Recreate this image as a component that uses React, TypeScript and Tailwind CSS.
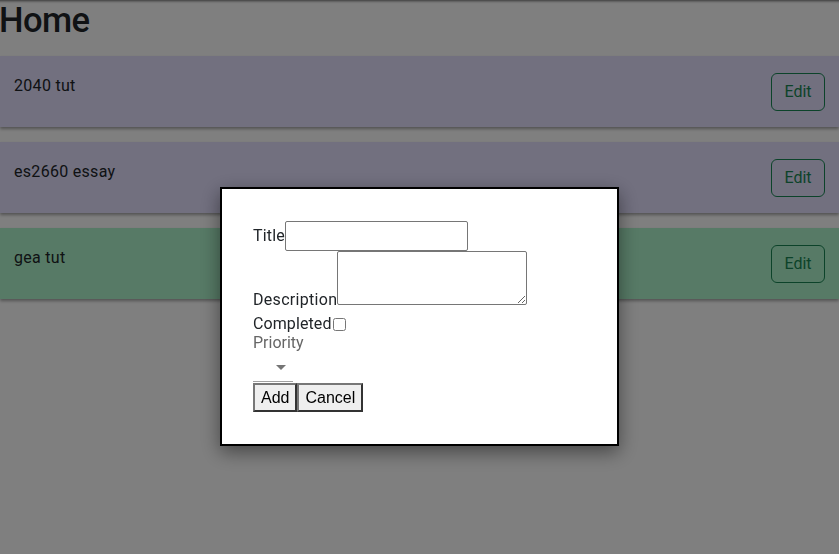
import React from "react";

const tasks = [
  { title: "2040 tut", done: false },
  { title: "es2660 essay", done: false },
  { title: "gea tut", done: true },
];

export default function App() {
  return (
    <div className="relative min-h-[554px] bg-white text-[#212529] font-['Roboto',sans-serif] text-base leading-6 shadow-[inset_0_4px_3px_-3px_rgba(0,0,0,0.6)]">
      <h1 className="text-[34.6px] leading-[1.2] font-medium tracking-[-0.6px] mb-2 -ml-[1px]">Home</h1>
      <div className="flex flex-col gap-[15px] pt-[6px]">
        {tasks.map((t) => (
          <div
            key={t.title}
            className={`flex justify-between h-[71px] pl-[14px] pr-[14px] pt-4 shadow-[0_2px_3px_rgba(0,0,0,0.35)] ${
              t.done ? "bg-[#aef5cc]" : "bg-[#e4e0fe]"
            }`}
          >
            <div className="mt-[2px] tracking-[0.3px]">{t.title}</div>
            <button className="self-center -mt-[15px] h-[38px] w-[54px] border border-[#198754] rounded-[6px] text-[#198754] text-base leading-6">
              Edit
            </button>
          </div>
        ))}
      </div>

      <div className="fixed inset-0 bg-black/50 flex justify-center items-start pt-[187px]">
        <div className="w-[399px] h-[259px] bg-white border-2 border-black shadow-[0_6px_18px_rgba(0,0,0,0.45)] pl-[31px] pt-8">
          <div className="flex items-center h-[30px]">
            <label className="tracking-[0.2px]">Title</label>
            <input className="w-[183px] h-[30px] border border-[#767676] rounded-[2px] px-[2px]" />
          </div>
          <div className="flex items-end h-[54px]">
            <label className="leading-4 tracking-[0.3px] -mb-[3px]">Description</label>
            <textarea className="w-[190px] h-[54px] border border-[#767676] rounded-[2px] resize-y"></textarea>
          </div>
          <div className="flex items-center h-[24px] mt-[7px]">
            <label className="tracking-[0.1px]">Completed</label>
            <input type="checkbox" className="w-[13px] h-[13px] ml-[1px]" />
          </div>
          <div className="relative h-[48px] w-[40px]">
            <div className="absolute left-0 top-[-5px] font-['Roboto',sans-serif] text-[#666666] text-base leading-[23px]">
              Priority
            </div>
            <div className="absolute left-0 top-[14px] w-[40px] h-[32px] border-b border-[#a0a0a0]">
              <svg
                className="absolute right-0 top-[5px] w-6 h-6"
                viewBox="0 0 24 24"
                fill="#757575"
              >
                <path d="M7 10l5 5 5-5z" />
              </svg>
            </div>
          </div>
          <div className="flex -mt-[1px] font-['Liberation_Sans',sans-serif]">
            <button className="h-[29px] px-[6px] bg-[#efefef] border-2 border-[#777] border-r-[#333] border-b-[#333] text-black text-base leading-[21px]">
              Add
            </button>
            <button className="h-[29px] px-[6px] bg-[#efefef] border-2 border-[#777] border-r-[#333] border-b-[#333] text-black text-base leading-[21px]">
              Cancel
            </button>
          </div>
        </div>
      </div>
    </div>
  );
}
